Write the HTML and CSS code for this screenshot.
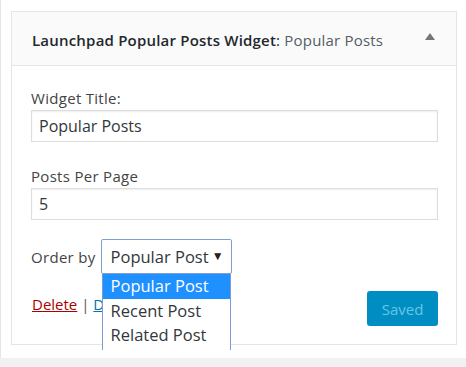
FILE: index.html
```html
<!DOCTYPE html>
<html lang="en">
<head>
    <meta charset="UTF-8">
    <meta name="viewport" content="width=device-width, initial-scale=1.0">
    <title>Launchpad Popular Posts Widget</title>
    <link rel="stylesheet" href="styles.css">
</head>
<body>
    <div class="sidebar">
        <div class="widget">
            <div class="widget-top">
                <h3 class="widget-title">Launchpad Popular Posts Widget<span class="sep">:</span> <span class="instance">Popular Posts</span></h3>
                <span class="toggle"></span>
            </div>

            <div class="widget-inside">
                <div class="field">
                    <label class="label">Widget Title:</label>
                    <div class="input">Popular Posts</div>
                </div>

                <div class="field">
                    <label class="label">Posts Per Page</label>
                    <div class="input">5</div>
                </div>

                <div class="order-row">
                    <label class="label">Order by</label>
                    <div class="select-wrap">
                        <div class="select">
                            <span>Popular Post</span>
                            <span class="caret">&#9660;</span>
                        </div>
                        <ul class="options">
                            <li class="option active">Popular Post</li>
                            <li class="option">Recent Post</li>
                            <li class="option">Related Post</li>
                        </ul>
                    </div>
                </div>

                <div class="actions">
                    <div class="links">
                        <a href="#" class="delete">Delete</a> | <a href="#" class="done">Done</a>
                    </div>
                    <button class="saved" disabled>Saved</button>
                </div>
            </div>
        </div>
    </div>
</body>
</html>
```

FILE: styles.css
```css
* {
    margin: 0;
    padding: 0;
    box-sizing: border-box;
}
body {
    font-family: "Open Sans", "Noto Sans", sans-serif;
    font-size: 15px;
    color: #32373c;
    background-color: #f1f1f1;
}
.sidebar {
    width: 466px;
    height: 358px;
    background: #fff;
    border-left: 1px solid #e5e5e5;
    box-shadow: 0 1px 2px rgba(0, 0, 0, 0.06);
    padding: 11px 9px 0 10px;
}
.widget {
    width: 446px;
    border: 1px solid #e5e5e5;
    background: #fff;
}
.widget-top {
    height: 54px;
    background: #fafafa;
    border-bottom: 1px solid #e5e5e5;
    display: flex;
    align-items: center;
    justify-content: space-between;
    padding: 0 20px 0 20px;
}
.widget-title {
    font-size: 15px;
    font-weight: 600;
    letter-spacing: 0.2px;
    color: #23282d;
    line-height: 20px;
    padding-top: 2px;
}
.widget-title .instance {
    color: #555d66;
    font-weight: 400;
}
.widget-title .sep {
    font-weight: 400;
}
.toggle {
    width: 0;
    height: 0;
    border-left: 5px solid transparent;
    border-right: 5px solid transparent;
    border-bottom: 7px solid #72777c;
    margin-top: -5px;
    margin-right: 1px;
}
.widget-inside {
    padding: 22px 18px 18px 19px;
}
.field {
    margin-bottom: 24px;
}
.label {
    display: block;
    line-height: 20px;
    margin-bottom: 2px;
    letter-spacing: 0.3px;
    color: #444;
}
.input {
    height: 32px;
    border: 1px solid #ddd;
    box-shadow: inset 0 1px 2px rgba(0, 0, 0, 0.07);
    padding: 0 7px;
    font-size: 16px;
    line-height: 30px;
    color: #32373c;
}
.order-row {
    display: flex;
    align-items: center;
    gap: 5px;
    margin-top: -5px;
}
.order-row .label {
    margin-bottom: 0;
}
.select-wrap {
    position: relative;
}
.select {
    width: 131px;
    height: 35px;
    border: 1px solid #7e9ed3;
    border-radius: 2px;
    display: flex;
    align-items: center;
    justify-content: space-between;
    padding: 0 7px 0 9px;
    font-size: 16.5px;
    color: #32373c;
}
.caret {
    font-size: 12px;
    color: #222;
    margin-top: -3px;
}
.options {
    position: absolute;
    top: 35px;
    left: 1px;
    width: 129px;
    height: 76px;
    overflow: hidden;
    list-style: none;
    background: #fff;
    border: 1px solid #7a9cd3;
    border-bottom: none;
    border-top: none;
    z-index: 2;
}
.option {
    height: 24.5px;
    line-height: 24px;
    padding: 0 8px;
    font-size: 16.5px;
    color: #32373c;
}
.option.active {
    background: #1e90ff;
    color: #fff;
}
.actions {
    display: flex;
    justify-content: space-between;
    align-items: flex-start;
    margin-top: 17px;
}
.links {
    color: #555;
    padding-left: 1px;
    padding-top: 3px;
}
.links a {
    text-decoration: underline;
}
.delete {
    color: #a00;
}
.done {
    color: #0073aa;
}
.saved {
    width: 71px;
    height: 35px;
    border: none;
    border-radius: 3px;
    background: #008ec2;
    color: #66c6e4;
    font-family: inherit;
    font-size: 15px;
}
```
